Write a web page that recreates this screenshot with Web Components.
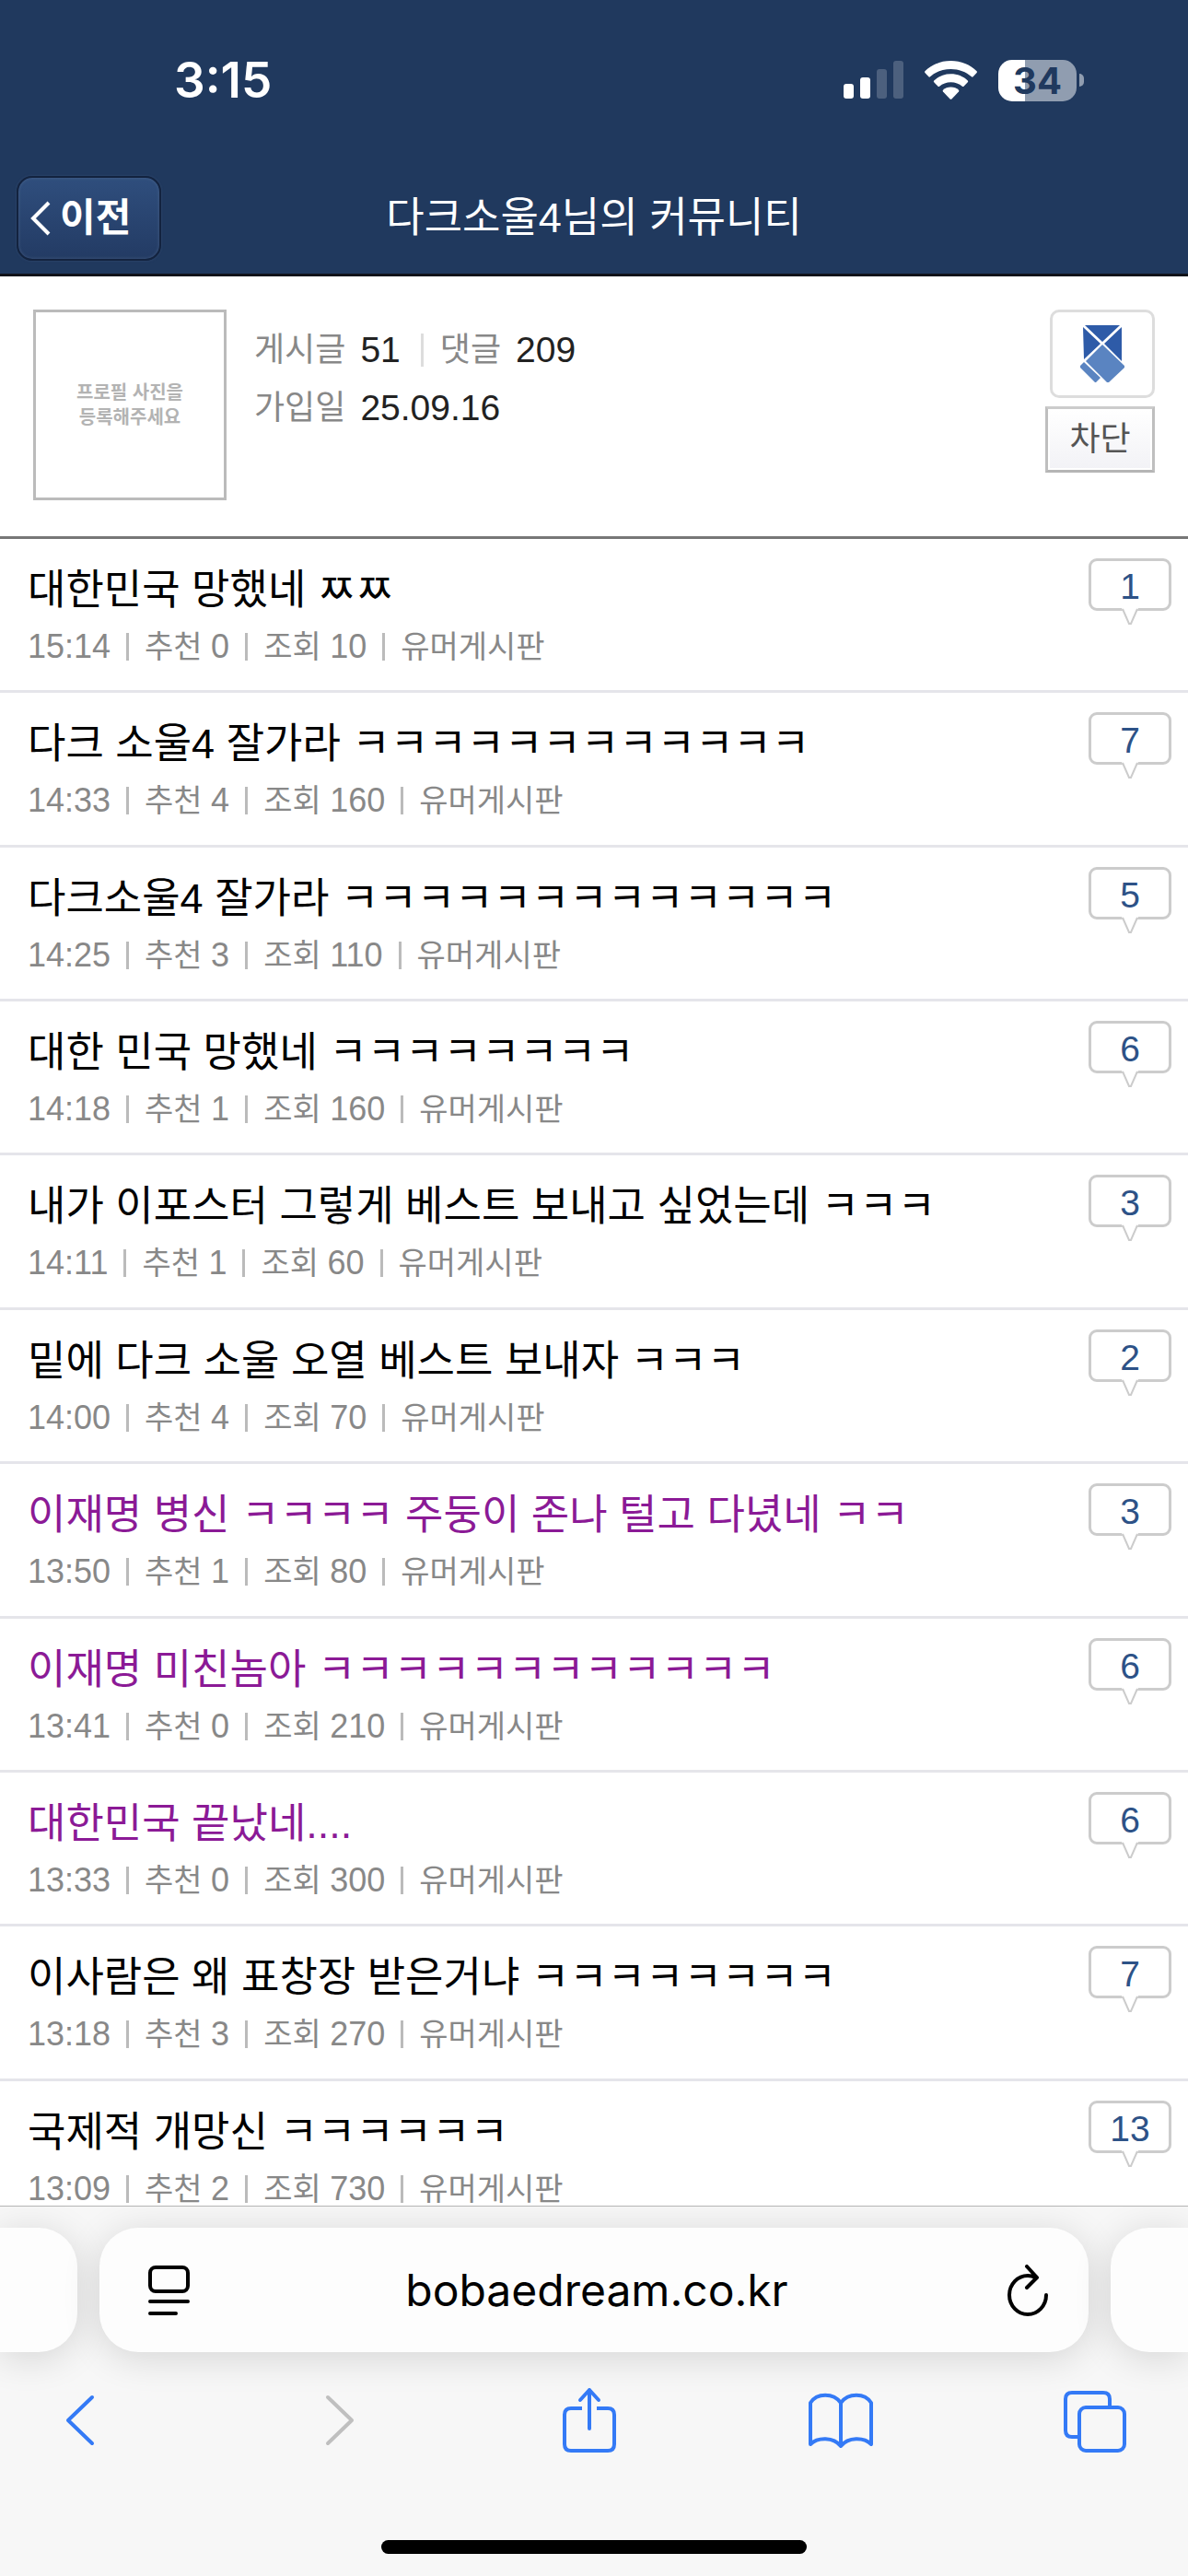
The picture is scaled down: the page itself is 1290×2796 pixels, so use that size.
<!DOCTYPE html>
<html lang="ko">
<head>
<meta charset="utf-8">
<meta name="viewport" content="width=device-width, initial-scale=1">
<title>다크소울4님의 커뮤니티</title>
<style>
  :root {
    --navy: #20395e;
    --blue: #347af6;
    --web-font: "Liberation Sans", "Noto Sans CJK KR", sans-serif;
    --ui-font: Inter, "Noto Sans CJK KR", sans-serif;
  }
  html, body { height: 100%; margin: 0; }
  body { background: #fff; font-family: var(--web-font); overflow: hidden; }
</style>
</head>
<body>
<phone-screen>
  <status-bar slot="top" time="3:15" battery="34"></status-bar>
  <nav-header slot="top" back="이전">다크소울4님의 커뮤니티</nav-header>

  <member-profile posts="51" comments="209" joined="25.09.16"></member-profile>
  <post-list>
    <post-row time="15:14" likes="0" views="10" replies="1">대한민국 망했네 ㅉㅉ</post-row>
    <post-row time="14:33" likes="4" views="160" replies="7">다크 소울4 잘가라 ㅋㅋㅋㅋㅋㅋㅋㅋㅋㅋㅋㅋ</post-row>
    <post-row time="14:25" likes="3" views="110" replies="5">다크소울4 잘가라 ㅋㅋㅋㅋㅋㅋㅋㅋㅋㅋㅋㅋㅋ</post-row>
    <post-row time="14:18" likes="1" views="160" replies="6">대한 민국 망했네 ㅋㅋㅋㅋㅋㅋㅋㅋ</post-row>
    <post-row time="14:11" likes="1" views="60" replies="3">내가 이포스터 그렇게 베스트 보내고 싶었는데 ㅋㅋㅋ</post-row>
    <post-row time="14:00" likes="4" views="70" replies="2">밑에 다크 소울 오열 베스트 보내자 ㅋㅋㅋ</post-row>
    <post-row time="13:50" likes="1" views="80" replies="3" seen>이재명 병신 ㅋㅋㅋㅋ 주둥이 존나 털고 다녔네 ㅋㅋ</post-row>
    <post-row time="13:41" likes="0" views="210" replies="6" seen>이재명 미친놈아 ㅋㅋㅋㅋㅋㅋㅋㅋㅋㅋㅋㅋ</post-row>
    <post-row time="13:33" likes="0" views="300" replies="6" seen>대한민국 끝났네....</post-row>
    <post-row time="13:18" likes="3" views="270" replies="7">이사람은 왜 표창장 받은거냐 ㅋㅋㅋㅋㅋㅋㅋㅋ</post-row>
    <post-row time="13:09" likes="2" views="730" replies="13">국제적 개망신 ㅋㅋㅋㅋㅋㅋ</post-row>
  </post-list>

  <browser-bar slot="bottom" url="bobaedream.co.kr"></browser-bar>
</phone-screen>

<script>
(function() {
  // Frame: fixed bars above and below, page content clipped in between
  class PhoneScreen extends HTMLElement {
    constructor() {
      super();
      this.attachShadow({ mode: 'open' });
      this.shadowRoot.innerHTML = `
        <style>
          :host { display: flex; flex-direction: column; height: 100vh; }
          header { background: var(--navy); border-bottom: 3px solid #11131a; }
          main { flex: 1; min-height: 0; overflow: hidden; }
        </style>
        <header><slot name="top"></slot></header>
        <main><slot></slot></main>
        <slot name="bottom"></slot>
      `;
    }
  }
  customElements.define('phone-screen', PhoneScreen);

  class StatusBar extends HTMLElement {
    constructor() {
      super();
      this.attachShadow({ mode: 'open' });
      const battery = this.getAttribute('battery');
      this.shadowRoot.innerHTML = `
        <style>
          :host {
            display: flex; justify-content: space-between; align-items: center;
            height: 174px; padding: 0 113px 0 189px;
            color: #fff; font-family: var(--ui-font);
          }
          .time { font-size: 53px; font-weight: 600; line-height: 60px; }
          .icons { display: flex; align-items: center; gap: 23px; }
          svg { display: block; }
          .battery { display: flex; align-items: center; gap: 3px; }
          .cell {
            width: 85px; height: 45px; border-radius: 15px;
            background: linear-gradient(90deg, #fff ${battery}%, #909db0 ${battery}%);
            color: var(--navy); font-size: 40px; font-weight: 700; line-height: 45px; text-align: center;
          }
          .nub { width: 5px; height: 14px; border-radius: 0 5px 5px 0; background: #909db0; }
        </style>
        <span class="time">${this.getAttribute('time')}</span>
        <div class="icons">
          <svg width="65" height="42" viewBox="0 0 65 42" fill="#fff">
            <rect y="25" width="11" height="16" rx="3"/>
            <rect x="18" y="18" width="11" height="23" rx="3"/>
            <rect x="36" y="9" width="11" height="32" rx="3" opacity=".2"/>
            <rect x="54" width="11" height="41" rx="3" opacity=".2"/>
          </svg>
          <svg width="57" height="42" viewBox="0 0 57 42" fill="#fff">
            <path d="M28.500 0C39.500 0 49.500 4.200 56.600 11.200Q57.300 12 56.600 12.900L52.600 17.300Q51.800 18 51 17.300C45 11.900 37.200 8.900 28.500 8.900S12 11.900 6 17.300Q5.200 18 4.400 17.300L.4 12.900Q-.3 12 .4 11.200C7.500 4.200 17.500 0 28.500 0Z"/>
            <path d="M28.500 14.300C35.600 14.300 42 16.900 46.800 21.400Q47.600 22.300 46.800 23.200L42.500 27.700Q41.700 28.400 40.900 27.700C37.500 24.800 33.200 23.200 28.500 23.200S19.500 24.800 16.100 27.700Q15.300 28.400 14.500 27.700L10.200 23.200Q9.400 22.300 10.200 21.400C15 16.900 21.400 14.300 28.500 14.300Z"/>
            <path d="M28.500 28.500C31.800 28.500 34.800 29.700 37 31.700Q37.700 32.500 37 33.400L29.400 41.400Q28.500 42.200 27.600 41.400L20 33.400Q19.300 32.500 20 31.700C22.200 29.700 25.200 28.500 28.500 28.500Z"/>
          </svg>
          <div class="battery"><span class="cell">${battery}</span><span class="nub"></span></div>
        </div>
      `;
    }
  }
  customElements.define('status-bar', StatusBar);

  class NavHeader extends HTMLElement {
    constructor() {
      super();
      this.attachShadow({ mode: 'open' });
      this.shadowRoot.innerHTML = `
        <style>
          :host {
            display: grid; grid-template-columns: 1fr auto 1fr; align-items: center;
            height: 123px; padding: 2px 18px 0; box-sizing: border-box; color: #fff;
          }
          button {
            display: flex; align-items: center; gap: 10px;
            width: 157px; height: 92px; padding: 0 13px;
            border: 2px solid #13233f; border-radius: 17px;
            background: linear-gradient(#2f4e7d, #233b64);
            box-shadow: inset 0 0 3px 1px #5b719560, 0 0 2px 1px #38507560;
            color: #fff; font: bold 42px/60px var(--web-font);
          }
          h1 { margin: 0; font-size: 45px; font-weight: 400; line-height: 60px; }
        </style>
        <button type="button">
          <svg width="22" height="38" viewBox="0 0 22 38" fill="none" stroke="#fff" stroke-width="4"><path d="M20 2 3 19 20 36"/></svg>
          ${this.getAttribute('back')}
        </button>
        <h1><slot></slot></h1>
      `;
    }
  }
  customElements.define('nav-header', NavHeader);

  class MemberProfile extends HTMLElement {
    constructor() {
      super();
      this.attachShadow({ mode: 'open' });
      this.shadowRoot.innerHTML = `
        <style>
          :host {
            display: flex; align-items: flex-start; gap: 30px;
            padding: 36px 36px 39px; border-bottom: 3px solid #777;
          }
          .photo {
            display: flex; align-items: center; justify-content: center; box-sizing: border-box;
            width: 210px; height: 207px; border: 3px solid #bbb;
            color: #b3b3b3; font-size: 20px; font-weight: 700; line-height: 27px; text-align: center;
          }
          dl { flex: 1; margin: 12px 0 0; color: #888; font-size: 36px; line-height: 63px; }
          .line { display: flex; align-items: center; }
          dt { margin-right: 16px; }
          dd { margin: 0; color: #222; font-size: 39px; }
          .line i { width: 3px; height: 36px; margin: 0 18px 0 22px; background: #ddd; }
          .side { display: flex; flex-direction: column; align-items: flex-end; gap: 9px; }
          .badge {
            display: flex; align-items: center; justify-content: center; box-sizing: border-box;
            width: 114px; height: 96px; border: 3px solid #ddd; border-radius: 10px;
          }
          button {
            width: 119px; height: 72px; padding: 0;
            border: 3px solid #bfbfbf; border-top-color: #ccc; border-bottom-color: #b5b5b5;
            background: linear-gradient(#fff, #f2f2f6); box-shadow: inset 0 0 0 2px #fff;
            color: #555; font: 36px/60px var(--web-font);
          }
        </style>
        <div class="photo">프로필 사진을<br>등록해주세요</div>
        <dl>
          <div class="line">
            <dt>게시글</dt><dd>${this.getAttribute('posts')}</dd>
            <i></i>
            <dt>댓글</dt><dd>${this.getAttribute('comments')}</dd>
          </div>
          <div class="line"><dt>가입일</dt><dd>${this.getAttribute('joined')}</dd></div>
        </dl>
        <div class="side">
          <div class="badge">
            <svg width="48" height="62" viewBox="0 0 48 62">
              <path fill="#2e5ba8" d="M5 0H43L24 18ZM3 2 22 20 4 37ZM45 2 26 20 45 39Z"/>
              <path fill="#5a84c1" d="M24 21 48 44V46L31 62H29L6 39ZM4 40 22 57 17 62H16L0 46V44Z"/>
            </svg>
          </div>
          <button type="button">차단</button>
        </div>
      `;
    }
  }
  customElements.define('member-profile', MemberProfile);

  class PostList extends HTMLElement {
    constructor() {
      super();
      this.attachShadow({ mode: 'open' });
      this.shadowRoot.innerHTML = `
        <style>
          :host { display: grid; grid-auto-rows: 1fr; min-height: 1841px; }
        </style>
        <slot></slot>
      `;
    }
  }
  customElements.define('post-list', PostList);

  class PostRow extends HTMLElement {
    constructor() {
      super();
      this.attachShadow({ mode: 'open' });
      this.shadowRoot.innerHTML = `
        <style>
          :host {
            display: flex; justify-content: space-between; align-items: flex-start; box-sizing: border-box;
            padding: 21px 18px 0 30px; border-bottom: 3px solid #e5e5ea;
          }
          a { display: block; color: #000; font-size: 45px; line-height: 70px; text-decoration: none; }
          :host([seen]) a { color: #8b1a96; }
          .meta { display: flex; align-items: center; gap: 17px; color: #888; font-size: 34px; line-height: 52px; }
          .meta b { font-size: 36px; font-weight: 400; }
          .meta i { width: 3px; height: 30px; background: #bbb; }
          .replies { display: flex; flex-direction: column; align-items: center; }
          .count {
            box-sizing: border-box; width: 90px; height: 57px; border: 3px solid #ccc; border-radius: 9px;
            color: #2d5287; font-size: 39px; line-height: 55px; text-align: center;
          }
          svg { display: block; margin-top: -3px; }
        </style>
        <div>
          <a href="#"><slot></slot></a>
          <div class="meta">
            <b>${this.getAttribute('time')}</b><i></i>
            <span>추천 <b>${this.getAttribute('likes')}</b></span><i></i>
            <span>조회 <b>${this.getAttribute('views')}</b></span><i></i>
            <span>유머게시판</span>
          </div>
        </div>
        <div class="replies">
          <span class="count">${this.getAttribute('replies')}</span>
          <svg width="20" height="18" viewBox="0 0 20 18"><path d="M1 0 8 17H12L19 0" fill="#fff"/><path d="M2 1 9 17H11L18 1" fill="none" stroke="#ccc" stroke-width="2"/></svg>
        </div>
      `;
    }
  }
  customElements.define('post-row', PostRow);

  class BrowserBar extends HTMLElement {
    constructor() {
      super();
      this.attachShadow({ mode: 'open' });
      this.shadowRoot.innerHTML = `
        <style>
          :host {
            display: block; box-sizing: border-box; height: 402px; overflow: hidden;
            border-top: 1px solid #b5b5b5; background: #f7f7f7; font-family: var(--ui-font);
          }
          .tabs { display: flex; gap: 24px; padding-top: 23px; }
          .card { width: 84px; height: 135px; background: #fdfdfd; box-shadow: 0 6px 40px rgba(0, 0, 0, .14); }
          .prev { border-radius: 0 42px 42px 0; }
          .next { border-radius: 42px 0 0 42px; }
          .address {
            flex: 1; display: flex; align-items: center; box-sizing: border-box;
            min-width: 0; padding: 0 42px 0 48px; border-radius: 42px;
          }
          input {
            flex: 1; min-width: 0; padding: 0; border: 0; outline: 0; background: none;
            color: #000; font: 48px/64px var(--ui-font); text-align: center;
          }
          button { padding: 0; border: 0; background: none; color: var(--blue); }
          svg { display: block; fill: none; stroke: currentColor; stroke-linecap: round; stroke-linejoin: round; }
          .address button { color: #000; }
          .tools { display: flex; justify-content: space-between; padding: 35px 64px 0 50px; }
          .tools svg { stroke-width: 4; }
          .tools button:disabled { color: #bfbfbf; }
          .home { width: 462px; height: 15px; margin: 91px auto 0; border-radius: 8px; background: #000; }
        </style>
        <div class="tabs">
          <div class="card prev"></div>
          <div class="card address">
            <button type="button" aria-label="페이지 메뉴">
              <svg width="50" height="56" viewBox="0 0 50 56" stroke-width="4"><rect x="7" y="3" width="41" height="26" rx="6"/><path d="M7 40H48M7 53H35"/></svg>
            </button>
            <input type="text" aria-label="주소" value="${this.getAttribute('url')}" readonly>
            <button type="button" aria-label="새로고침">
              <svg width="50" height="56" viewBox="0 0 50 56" stroke-width="4"><path d="M34 14C31 12 28 12 26 12A20 21 0 1 0 46 33M25 2 36 14 25 25"/></svg>
            </button>
          </div>
          <div class="card next"></div>
        </div>
        <div class="tools">
          <button type="button" aria-label="뒤로"><svg width="76" height="78" viewBox="0 0 76 78" stroke-width="5"><path d="M50 14 24 39 50 64"/></svg></button>
          <button type="button" aria-label="앞으로" disabled><svg width="76" height="78" viewBox="0 0 76 78" stroke-width="5"><path d="M31 14 57 39 31 64"/></svg></button>
          <button type="button" aria-label="공유"><svg width="76" height="78" viewBox="0 0 76 78"><path stroke-linecap="butt" d="M32 26H20Q13 26 13 33V65Q13 72 20 72H60Q67 72 67 65V33Q67 26 60 26H48"/><path d="M40 48V6M30 17 40 6 50 17"/></svg></button>
          <button type="button" aria-label="책갈피"><svg width="76" height="78" viewBox="0 0 76 78"><path d="M38 20C30 9 12 9 5 20V65C13 57 30 57 38 67C46 57 63 57 71 65V20C64 9 46 9 38 20ZM38 20V67"/></svg></button>
          <button type="button" aria-label="탭"><svg width="76" height="78" viewBox="0 0 76 78"><path stroke-linecap="butt" d="M22 57H14Q7 57 7 50V16Q7 9 14 9H48Q55 9 55 16V25"/><rect x="22" y="25" width="49" height="47" rx="7"/></svg></button>
        </div>
        <div class="home"></div>
      `;
    }
  }
  customElements.define('browser-bar', BrowserBar);
})();
</script>
</body>
</html>
